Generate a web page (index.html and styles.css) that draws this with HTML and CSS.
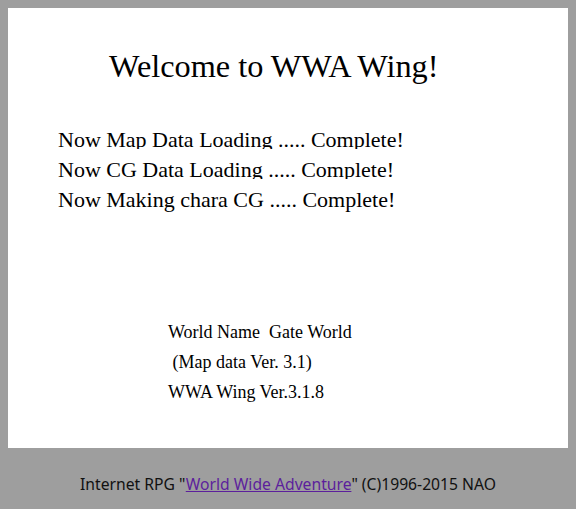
FILE: index.html
```html
<!DOCTYPE html>
<html>
<head>
<meta charset="utf-8">
<title>WWA Wing</title>
<link rel="stylesheet" href="styles.css">
</head>
<body>
<div class="page">
  <div class="screen">
    <h1 class="title">Welcome to WWA Wing!</h1>
    <div class="loading">
      <div class="line clip">Now Map Data Loading ..... Complete!</div>
      <div class="line clip">Now CG Data Loading ..... Complete!</div>
      <div class="line">Now Making chara CG ..... Complete!</div>
    </div>
    <div class="info">
      <div class="info-line">World Name&nbsp;&nbsp;Gate World</div>
      <div class="info-line">&nbsp;(Map data Ver. 3.1)</div>
      <div class="info-line">WWA Wing Ver.3.1.8</div>
    </div>
  </div>
  <p class="footer">Internet RPG "<a href="#" class="link">World Wide Adventure</a>" (C)1996-2015 NAO</p>
</div>
</body>
</html>
```

FILE: styles.css
```css
html, body {
  margin: 0;
  padding: 0;
  background: #9e9e9e;
}

.page {
  padding: 8px 8px 0 8px;
}

.screen {
  width: 560px;
  height: 440px;
  background: #ffffff;
  padding-top: 38px;
  box-sizing: border-box;
  font-family: "Liberation Serif", "Times New Roman", serif;
  color: #000;
}

.title {
  margin: 0 0 0 101px;
  font-size: 32.3px;
  line-height: 40px;
  font-weight: normal;
  white-space: nowrap;
}

.loading {
  margin: 39px 0 0 50px;
  font-size: 22px;
  line-height: 30px;
}

.line {
  height: 30px;
  white-space: nowrap;
}

.line.clip {
  height: 24px;
  overflow: hidden;
  margin-bottom: 6px;
}

.info {
  margin: 102px 0 0 160px;
  font-size: 18px;
  line-height: 30px;
}

.info-line {
  white-space: nowrap;
}

.footer {
  margin: 0;
  padding-top: 25px;
  text-align: center;
  font-family: "Noto Sans", "Open Sans", sans-serif;
  font-size: 15.7px;
  line-height: 22px;
  color: #111;
}

.link {
  color: #5c1f9c;
  text-decoration: underline;
}
```
